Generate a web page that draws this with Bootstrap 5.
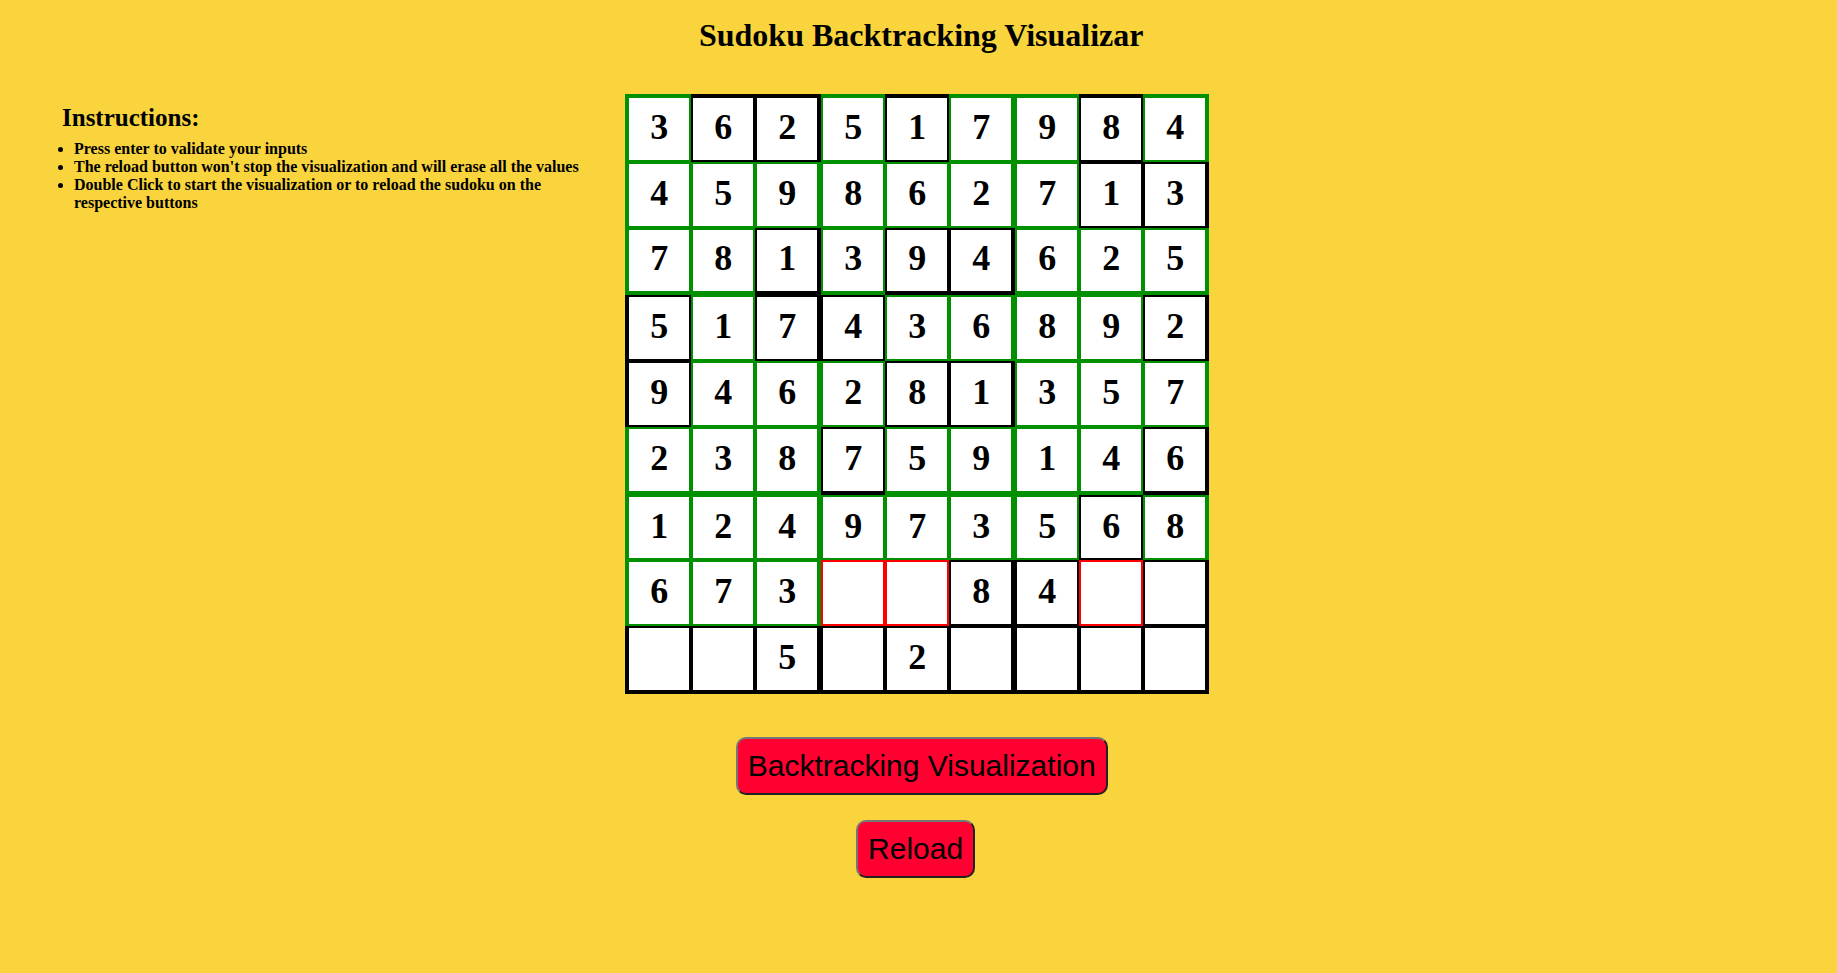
<!DOCTYPE html>
<html lang="en">
<head>
<meta charset="utf-8">
<meta name="viewport" content="width=device-width, initial-scale=1">
<title>Sudoku Backtracking Visualizar</title>
<link href="https://cdn.jsdelivr.net/npm/bootstrap@5.3.0/dist/css/bootstrap.min.css" rel="stylesheet">
<style>
  body { background: #fad43c; color: #000; font-family: "Liberation Serif", "Times New Roman", serif; }
  .page-title { font-size: 32px; line-height: 36px; margin-left: 38.05%; padding-top: 17px; margin-bottom: 41px; }
  .side { width: 34.03%; padding: 9px 44px 0 62px; }
  .side h2 { font-size: 25px; line-height: 29px; margin-bottom: 8px; }
  .side ul { line-height: 18px; padding-left: 12px; }
  .board { grid-template-columns: repeat(9, auto); height: 600px; }
  .cell {
    box-sizing: content-box; width: 60px; padding: 0 0 3px; min-height: 0;
    border: 2px solid #000; border-radius: 0; background: #fff; color: #000;
    font-size: 36px; font-weight: 700; line-height: 41px; text-align: center; outline-offset: -2px;
  }
  .cell.ok { border-color: #009000; }
  .cell.bad { border-color: #f00; }
  .edge-l { border-left-width: 4px; }
  .edge-r { border-right-width: 4px; }
  .edge-t { border-top-width: 4px; }
  .edge-b { border-bottom-width: 4px; }
  .action {
    background: #ff0030; color: #000; border: 2px solid; border-color: #767676 #212121 #212121 #767676;
    border-radius: 10px; padding: 10px;
    font-family: "Liberation Sans", Arial, sans-serif; font-size: 30px; line-height: 34px;
  }
  .visualize { margin: 43px 0 25px 40.05%; }
  .reload { margin-left: 46.6%; }
</style>
</head>
<body>
<header><h1 class="page-title fw-bold">Sudoku Backtracking Visualizar</h1></header>
<main>
  <div class="d-flex align-items-start">
    <section class="side flex-shrink-0">
      <h2 class="fw-bold">Instructions:</h2>
      <ul class="fw-bold mb-0">
        <li>Press enter to validate your inputs</li>
        <li>The reload button won't stop the visualization and will erase all the values</li>
        <li>Double Click to start the visualization or to reload the sudoku on the respective buttons</li>
      </ul>
    </section>
    <div class="board d-grid flex-shrink-0" id="board" role="group" aria-label="Sudoku board"></div>
  </div>
  <div class="d-flex flex-column align-items-start">
    <button type="button" class="action visualize">Backtracking Visualization</button>
    <button type="button" class="action reload">Reload</button>
  </div>
</main>
<script src="https://cdn.jsdelivr.net/npm/bootstrap@5.3.0/dist/js/bootstrap.bundle.min.js"></script>
<script>
  const values = ["362517984", "459862713", "781394625", "517436892", "946281357",
                  "238759146", "124973568", "673  84  ", "  5 2    "];
  // g: placed by the solver, k: untouched, r: emptied while backtracking
  const states = ["gkkgkggkg", "gggggggkk", "ggkgkkggg", "kgkkggggk", "kgggkkggg",
                  "gggkggggk", "gggggggkg", "gggrrkkrk", "kkkkkkkkk"];
  const board = document.getElementById("board");
  values.forEach((row, y) => [...row].forEach((value, x) => {
    const cell = document.createElement("input");
    cell.type = "text";
    cell.maxLength = 1;
    cell.size = 1;
    cell.setAttribute("value", value.trim());
    cell.setAttribute("aria-label", `Row ${y + 1}, column ${x + 1}`);
    const state = states[y][x];
    cell.className = "cell";
    if (state === "g") cell.classList.add("ok");
    if (state === "r") cell.classList.add("bad");
    if (x === 0) cell.classList.add("edge-l");
    if (x % 3 === 2) cell.classList.add("edge-r");
    if (y === 0) cell.classList.add("edge-t");
    if (y % 3 === 2) cell.classList.add("edge-b");
    board.append(cell);
  }));
</script>
</body>
</html>
